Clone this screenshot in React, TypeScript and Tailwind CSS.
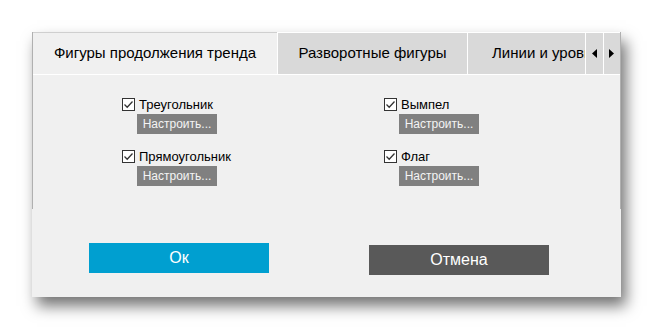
const left = [
  { label: 'Треугольник' },
  { label: 'Прямоугольник' },
];
const right = [{ label: 'Вымпел' }, { label: 'Флаг' }];

function Check() {
  return (
    <span className="w-[13px] h-[13px] border border-[#333] bg-white flex items-center justify-center shrink-0">
      <svg width="11" height="11" viewBox="0 0 11 11">
        <path d="M1.5 5.5 L4.2 8.2 L9.5 2.5" fill="none" stroke="#333" strokeWidth="1.3" />
      </svg>
    </span>
  );
}

function Option({ label }: { label: string }) {
  return (
    <div className="flex flex-col h-[52px]">
      <div className="flex items-center gap-[4px] h-[14px]">
        <Check />
        <span className="text-[13px] leading-none text-black">{label}</span>
      </div>
      <div className="ml-[15px] mt-[3px] w-[80px] h-[20px] bg-[#808080] text-[#f4f4f4] text-[12px] flex items-center justify-center">
        Настроить...
      </div>
    </div>
  );
}

export default function App() {
  return (
    <div
      className="w-[653px] h-[329px] bg-white pt-[32px] pl-[32px]"
      style={{ fontFamily: '"Liberation Sans", Arial, sans-serif' }}
    >
      <div className="w-[589px] h-[265px] bg-[#f0f0f0] shadow-[5px_9px_14px_rgba(0,0,0,0.55)] flex flex-col">
        <div className="h-[177px] border-x border-[#b0b0b0] flex flex-col">
          {/* tabs */}
          <div className="flex h-[43px] border-b border-white shrink-0">
            <div className="w-[244px] border-t border-[#cfcfcf] bg-[#f0f0f0] flex items-center justify-center text-[15px] text-black">
              Фигуры продолжения тренда
            </div>
            <div className="w-[190px] border-l border-t border-white bg-[#d9d9d9] flex items-center justify-center text-[15px] text-black">
              Разворотные фигуры
            </div>
            <div className="w-[118px] border-l border-t border-white bg-[#d9d9d9] flex items-center pl-[24px] overflow-hidden whitespace-nowrap text-[15px] text-black">
              Линии и уровни
            </div>
            <div className="w-[18px] border-l border-t border-white bg-[#d9d9d9] flex items-center justify-center">
              <svg width="6" height="9" viewBox="0 0 6 9">
                <path d="M5 0 L0 4.5 L5 9 Z" fill="#000" />
              </svg>
            </div>
            <div className="w-[17px] border-l border-t border-white bg-[#d9d9d9] flex items-center justify-center">
              <svg width="6" height="9" viewBox="0 0 6 9">
                <path d="M0 0 L5 4.5 L0 9 Z" fill="#000" />
              </svg>
            </div>
          </div>

          {/* options */}
          <div className="flex pt-[22px] pl-[89px]">
            <div className="w-[262px] flex flex-col">
              {left.map((o) => (
                <Option key={o.label} label={o.label} />
              ))}
            </div>
            <div className="flex flex-col">
              {right.map((o) => (
                <Option key={o.label} label={o.label} />
              ))}
            </div>
          </div>
        </div>

        {/* buttons */}
        <div className="flex items-start pl-[57px] pt-[34px]">
          <div className="w-[180px] h-[30px] bg-[#009fd0] text-white text-[16px] flex items-center justify-center">
            Ок
          </div>
          <div className="ml-[100px] mt-[2px] w-[180px] h-[30px] bg-[#595959] text-white text-[16px] flex items-center justify-center">
            Отмена
          </div>
        </div>
      </div>
    </div>
  );
}
